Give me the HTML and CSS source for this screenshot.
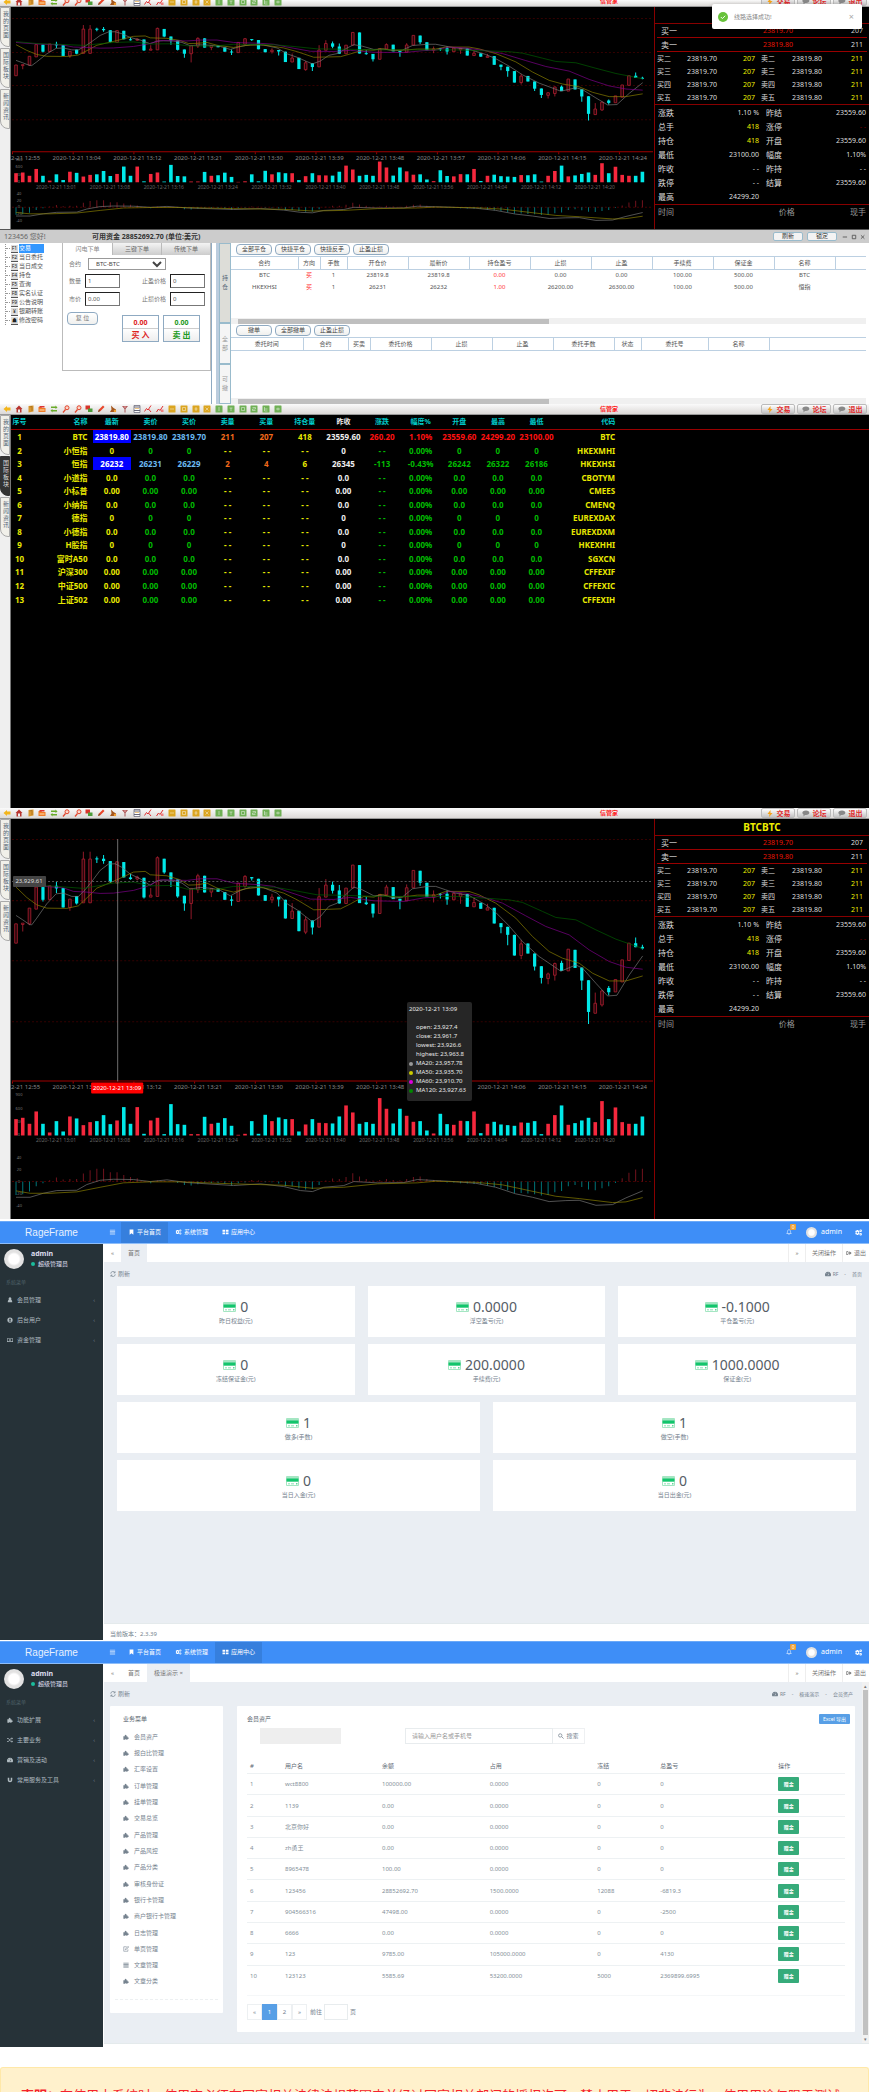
FILE: index.html
```html
<!DOCTYPE html>
<html lang="zh-CN">
<head>
<meta charset="utf-8">
<title>信管家</title>
<link rel="stylesheet" href="styles.css">
</head>
<body>
<svg class="sprite" aria-hidden="true">
  <symbol id="i-bars" viewBox="0 0 16 16"><path d="M1 2h14v2H1zM1 5.500h14v2H1zM1 9h14v2H1zM1 12.500h14v2H1z"/></symbol>
  <symbol id="i-bookmark" viewBox="0 0 16 16"><path d="M3 1h10v14l-5-4-5 4z"/></symbol>
  <symbol id="i-gears" viewBox="0 0 16 16"><path fill-rule="evenodd" d="M4 2.500h3l.5 1.500 1.500-.5 1.500 2-1 1.500v2l1 1.500-1.500 2-1.500-.5-.5 1.500H4l-.5-1.500-1.500.5L.5 10.500l1-1.500V7l-1-1.500L2 3.500l1.500.5zM5.500 6a2 2 0 100 4 2 2 0 000-4z"/><path fill-rule="evenodd" d="M13 1a2.800 2.800 0 110 5.600A2.800 2.800 0 0113 1zm0 1.800a1 1 0 100 2 1 1 0 000-2zM13 9a2.800 2.800 0 110 5.600A2.800 2.800 0 0113 9zm0 1.800a1 1 0 100 2 1 1 0 000-2z"/></symbol>
  <symbol id="i-grid" viewBox="0 0 16 16"><path d="M0 2h7v5H0zM9 2h7v5H9zM0 9h7v5H0zM9 9h7v5H9z"/></symbol>
  <symbol id="i-bell" viewBox="0 0 16 16"><path fill="none" stroke="currentColor" stroke-width="1.500" d="M2 12c2-2 2-4 2-6 0-2 1.500-4 4-4s4 2 4 4c0 2 0 4 2 6zM6.500 13.500c.5 1.500 2.500 1.500 3 0"/></symbol>
  <symbol id="i-user" viewBox="0 0 16 16"><path d="M8 1a3.500 3.500 0 013 5.500C13 8 14 11 14 14H2c0-3 1-6 3-7.500A3.500 3.500 0 018 1z"/></symbol>
  <symbol id="i-globe" viewBox="0 0 16 16"><path fill-rule="evenodd" d="M8 1a7 7 0 110 14A7 7 0 018 1zm0 3a2 2 0 100 4.500A2 2 0 008 4zM4.500 12h7c0-2-1.500-3-3.500-3s-3.500 1-3.500 3z"/></symbol>
  <symbol id="i-money" viewBox="0 0 16 16"><path fill-rule="evenodd" d="M0 3h16v10H0zm1.500 1.500v7h13v-7zM8 5.500c1.500 0 2 1 2 2.500s-.5 2.500-2 2.500S6 9.500 6 8s.5-2.500 2-2.500z"/></symbol>
  <symbol id="i-puzzle" viewBox="0 0 16 16"><path d="M1 6h4c-1-2 0-4 2-4s3 2 2 4h3v3c2-1 3 0 3 2s-1 3-3 2v2H9c0-2-3-2-3 0H1z"/></symbol>
  <symbol id="i-random" viewBox="0 0 16 16"><path fill="none" stroke="currentColor" stroke-width="2" d="M0 4h4l6 8h5M0 12h4l6-8h5M13 1.500L15.500 4 13 6.500M13 9.500l2.500 2.500-2.500 2.500"/></symbol>
  <symbol id="i-dash" viewBox="0 0 16 16"><path fill-rule="evenodd" d="M1 14a8 8 0 1114 0zM8 4v2h1V4zm-4 3l1 1 1-1-1-1zm6 0L7 11l1 1 3-4z"/></symbol>
  <symbol id="i-magnet" viewBox="0 0 16 16"><path d="M2 2h4v6c0 3 4 3 4 0V2h4v6c0 8-12 8-12 0z"/></symbol>
  <symbol id="i-refresh" viewBox="0 0 16 16"><path fill="none" stroke="currentColor" stroke-width="2" d="M2 7a6 6 0 0111-3M14 9a6 6 0 01-11 3M13.500 1v4h-4M2.500 15v-4h4"/></symbol>
  <symbol id="i-exit" viewBox="0 0 16 16"><path d="M1 3h5v2H3v6h3v2H1zM5 6.500h4V3l6 5-6 5V9.500H5z"/></symbol>
  <symbol id="i-edit" viewBox="0 0 16 16"><path fill="none" stroke="currentColor" stroke-width="1.500" d="M10 2H2v12h11V9M6 10l1-3 7-6 1.500 2-7 6z"/></symbol>
  <symbol id="i-search" viewBox="0 0 16 16"><path fill="none" stroke="currentColor" stroke-width="2" d="M10.500 6.500a4.500 4.500 0 11-9 0 4.500 4.500 0 019 0zM10 10l5 5"/></symbol>
  <symbol id="i-card" viewBox="0 0 26 20"><rect width="26" height="20" rx="2" fill="#a5e6c3"/><path fill="#12c56c" d="M1 5h24v6H1z"/><path fill="#fff" d="M2 12h22v6H2z"/><path fill="#5fd699" d="M4 15h4v1.500H4zM10 15h6v1.500h-6zM20 14h3v3h-3z"/></symbol>
</svg>

<section class="terminal terminal-short">
  <header class="toolbar"></header>
  <div class="terminal-body">
    <nav class="side-tabs"></nav>
    <div class="chart" data-size="short"></div>
    <aside class="quote"></aside>
  </div>
  <div class="toast" role="status">
    <svg class="toast-icon" viewBox="0 0 16 16"><circle cx="8" cy="8" r="8" fill="#67c23a"/><path d="M4.500 8l2.500 2.500 4.500-4.500" fill="none" stroke="#fff" stroke-width="1.500"/></svg>
    <span>线路选择成功!</span>
    <button type="button" class="toast-close" aria-label="关闭">×</button>
  </div>
</section>

<section class="trade">
  <header class="trade-head">
    <span class="greet">123456 您好!</span>
    <strong>可用资金 28852692.70 (单位:美元)</strong>
    <div class="window-tools">
      <button type="button">刷新</button><button type="button">锁定</button>
      <svg viewBox="0 0 30 8"><path d="M2 4h5M13 2h4v4h-4zM23 2l4 4M27 2l-4 4" fill="none" stroke="#555" stroke-width="1"/></svg>
    </div>
  </header>
  <div class="trade-body">
    <ul class="tree">
      <li class="on"><i>F1</i><a href="#">交易</a></li>
      <li><i>F2</i><a href="#">当日委托</a></li>
      <li><i>F3</i><a href="#">当日成交</a></li>
      <li><i>F4</i><a href="#">持仓</a></li>
      <li><i>F5</i><a href="#">查询</a></li>
      <li><i>F8</i><a href="#">实名认证</a></li>
      <li><i>F9</i><a href="#">公告说明</a></li>
      <li><i>¥</i><a href="#">银期转账</a></li>
      <li><i>☗</i><a href="#">修改密码</a></li>
    </ul>
    <div class="order">
      <div class="order-tabs"><button type="button" class="on">闪电下单</button><button type="button">三键下单</button><button type="button">传统下单</button></div>
      <form class="order-form">
        <label for="sym">合约</label><select id="sym"><option>BTC-BTC</option></select>
        <label for="qty">数量</label><input id="qty" value="1"><label for="tp">止盈价格</label><input id="tp" value="0">
        <label for="px">市价</label><input id="px" value="0.00"><label for="sl">止损价格</label><input id="sl" value="0">
        <div class="order-actions">
          <button type="reset" class="pill">复 位</button>
          <button type="button" class="deal buy"><b>0.00</b><span>买 入</span></button>
          <button type="button" class="deal sell"><b>0.00</b><span>卖 出</span></button>
        </div>
      </form>
    </div>
    <div class="splitter"></div>
    <nav class="pos-tabs"><button type="button" class="on">持仓</button><button type="button">全部</button><button type="button">可撤</button></nav>
    <div class="pos">
      <div class="pills"><button type="button" class="pill">全部平仓</button><button type="button" class="pill">快捷平仓</button><button type="button" class="pill">快捷反手</button><button type="button" class="pill">止盈止损</button></div>
      <div class="pos-box pos-box-a">
        <table class="pos-table">
          <colgroup><col class="w67"><col class="w21"><col class="w28"><col class="w61"><col class="w61"><col class="w61"><col class="w61"><col class="w61"><col class="w61"><col class="w61"><col class="w61"><col></colgroup>
          <thead><tr><th>合约</th><th>方向</th><th>手数</th><th>开仓价</th><th>最新价</th><th>持仓盈亏</th><th>止损</th><th>止盈</th><th>手续费</th><th>保证金</th><th>名称</th><th></th></tr></thead>
          <tbody>
            <tr><td>BTC</td><td class="up">买</td><td>1</td><td>23819.8</td><td>23819.8</td><td class="up">0.00</td><td>0.00</td><td>0.00</td><td>100.00</td><td>500.00</td><td>BTC</td><td></td></tr>
            <tr><td>HKEXHSI</td><td class="up">买</td><td>1</td><td>26231</td><td>26232</td><td class="up">1.00</td><td>26200.00</td><td>26300.00</td><td>100.00</td><td>500.00</td><td>恒指</td><td></td></tr>
          </tbody>
        </table>
        <div class="hscroll"><span></span></div>
      </div>
      <div class="pills"><button type="button" class="pill">撤单</button><button type="button" class="pill">全部撤单</button><button type="button" class="pill">止盈止损</button></div>
      <div class="pos-box pos-box-b">
        <table class="pos-table">
          <colgroup><col class="w72"><col class="w45"><col class="w21"><col class="w61"><col class="w61"><col class="w61"><col class="w61"><col class="w28"><col class="w67"><col class="w61"><col></colgroup>
          <thead><tr><th>委托时间</th><th>合约</th><th>买卖</th><th>委托价格</th><th>止损</th><th>止盈</th><th>委托手数</th><th>状态</th><th>委托号</th><th>名称</th><th></th></tr></thead>
        </table>
        <div class="hscroll"><span></span></div>
      </div>
    </div>
  </div>
</section>

<section class="terminal terminal-market">
  <header class="toolbar"></header>
  <div class="terminal-body">
    <nav class="side-tabs" data-on="1"></nav>
    <div class="market">
      <table class="market-table">
        <colgroup><col class="c-no"><col class="c-name"><col class="c-num" span="12"><col class="c-code"><col></colgroup>
        <thead><tr><th>序号</th><th class="r">名称</th><th>最新</th><th>卖价</th><th>买价</th><th>卖量</th><th>买量</th><th>持仓量</th><th class="white">昨收</th><th>涨跌</th><th>幅度%</th><th>开盘</th><th>最高</th><th>最低</th><th class="r">代码</th><th></th></tr></thead>
        <tbody id="market-rows"></tbody>
      </table>
    </div>
  </div>
</section>

<section class="terminal terminal-tall">
  <header class="toolbar"></header>
  <div class="terminal-body">
    <nav class="side-tabs"></nav>
    <div class="chart" data-size="tall">
      <div class="tip">
        <p>2020-12-21 13:09</p>
        <ul>
          <li>open: 23,927.4</li><li>close: 23,961.7</li><li>lowest: 23,926.6</li><li>highest: 23,963.8</li>
          <li class="dot d20">MA20: 23,957.78</li><li class="dot d50">MA50: 23,935.70</li><li class="dot d60">MA60: 23,910.70</li><li class="dot d120">MA120: 23,927.63</li>
        </ul>
      </div>
    </div>
    <aside class="quote"></aside>
  </div>
</section>

<section class="admin admin-home">
  <header class="admin-head">
    <a class="brand" href="#">RageFrame</a>
    <nav>
      <a href="#" class="burger" aria-label="菜单"><svg class="icon"><use href="#i-bars"/></svg></a>
      <a href="#" class="on"><svg class="icon"><use href="#i-bookmark"/></svg>平台首页</a>
      <a href="#"><svg class="icon"><use href="#i-gears"/></svg>系统管理</a>
      <a href="#"><svg class="icon"><use href="#i-grid"/></svg>应用中心</a>
    </nav>
    <div class="me"><span class="bell"><svg class="icon"><use href="#i-bell"/></svg><em>0</em></span><span class="avatar avatar-s"></span><span>admin</span><svg class="icon"><use href="#i-gears"/></svg></div>
  </header>
  <div class="admin-main">
    <aside class="admin-side">
      <div class="profile"><span class="avatar"></span><p><b>admin</b><span class="role">超级管理员</span></p></div>
      <h3>系统菜单</h3>
      <ul>
        <li><a href="#"><svg class="icon"><use href="#i-user"/></svg>会员管理<i>‹</i></a></li>
        <li><a href="#"><svg class="icon"><use href="#i-globe"/></svg>后台用户<i>‹</i></a></li>
        <li><a href="#"><svg class="icon"><use href="#i-money"/></svg>资金管理<i>‹</i></a></li>
      </ul>
    </aside>
    <div class="admin-page">
      <div class="page-tabs"><a href="#" class="arrow">«</a><a href="#" class="on">首页</a><span class="grow"></span><a href="#" class="arrow line">»</a><a href="#" class="line">关闭操作</a><a href="#" class="line out"><svg class="icon"><use href="#i-exit"/></svg>退出</a></div>
      <div class="page-body">
        <div class="crumbs"><a href="#"><svg class="icon"><use href="#i-refresh"/></svg>刷新</a><span class="path"><svg class="icon"><use href="#i-dash"/></svg>RF<i>-</i>首页</span></div>
        <div class="cards">
          <div class="card"><p><svg class="card-icon"><use href="#i-card"/></svg>0</p><small>昨日权益(元)</small></div>
          <div class="card"><p><svg class="card-icon"><use href="#i-card"/></svg>0.0000</p><small>浮空盈亏(元)</small></div>
          <div class="card"><p><svg class="card-icon"><use href="#i-card"/></svg>-0.1000</p><small>平仓盈亏(元)</small></div>
          <div class="card"><p><svg class="card-icon"><use href="#i-card"/></svg>0</p><small>冻结保证金(元)</small></div>
          <div class="card"><p><svg class="card-icon"><use href="#i-card"/></svg>200.0000</p><small>手续费(元)</small></div>
          <div class="card"><p><svg class="card-icon"><use href="#i-card"/></svg>1000.0000</p><small>保证金(元)</small></div>
          <div class="card wide"><p><svg class="card-icon"><use href="#i-card"/></svg>1</p><small>做多(手数)</small></div>
          <div class="card wide"><p><svg class="card-icon"><use href="#i-card"/></svg>1</p><small>做空(手数)</small></div>
          <div class="card wide"><p><svg class="card-icon"><use href="#i-card"/></svg>0</p><small>当日入金(元)</small></div>
          <div class="card wide"><p><svg class="card-icon"><use href="#i-card"/></svg>0</p><small>当日出金(元)</small></div>
        </div>
      </div>
      <footer class="version">当前版本：2.3.39</footer>
    </div>
  </div>
</section>

<section class="admin admin-users">
  <header class="admin-head">
    <a class="brand" href="#">RageFrame</a>
    <nav>
      <a href="#" class="burger" aria-label="菜单"><svg class="icon"><use href="#i-bars"/></svg></a>
      <a href="#"><svg class="icon"><use href="#i-bookmark"/></svg>平台首页</a>
      <a href="#"><svg class="icon"><use href="#i-gears"/></svg>系统管理</a>
      <a href="#" class="on"><svg class="icon"><use href="#i-grid"/></svg>应用中心</a>
    </nav>
    <div class="me"><span class="bell"><svg class="icon"><use href="#i-bell"/></svg><em>0</em></span><span class="avatar avatar-s"></span><span>admin</span><svg class="icon"><use href="#i-gears"/></svg></div>
  </header>
  <div class="admin-main">
    <aside class="admin-side">
      <div class="profile"><span class="avatar"></span><p><b>admin</b><span class="role">超级管理员</span></p></div>
      <h3>系统菜单</h3>
      <ul>
        <li><a href="#"><svg class="icon"><use href="#i-puzzle"/></svg>功能扩展<i>‹</i></a></li>
        <li><a href="#"><svg class="icon"><use href="#i-random"/></svg>主要业务<i>‹</i></a></li>
        <li><a href="#"><svg class="icon"><use href="#i-dash"/></svg>营销及活动<i>‹</i></a></li>
        <li><a href="#"><svg class="icon"><use href="#i-magnet"/></svg>常用服务及工具<i>‹</i></a></li>
      </ul>
    </aside>
    <div class="admin-page">
      <div class="page-tabs"><a href="#" class="arrow">«</a><a href="#">首页</a><a href="#" class="on">极速演示 ×</a><span class="grow"></span><a href="#" class="arrow line">»</a><a href="#" class="line">关闭操作</a><a href="#" class="line out"><svg class="icon"><use href="#i-exit"/></svg>退出</a></div>
      <div class="page-body with-scroll">
        <div class="page-inner">
          <div class="crumbs"><a href="#"><svg class="icon"><use href="#i-refresh"/></svg>刷新</a><span class="path"><svg class="icon"><use href="#i-dash"/></svg>RF<i>-</i>极速演示<i>-</i>会员资产</span></div>
          <div class="columns">
            <div class="panel biz">
              <h4>业务菜单</h4>
              <ul id="biz-menu"></ul>
              <hr>
            </div>
            <div class="panel users">
              <div class="panel-head"><h4>会员资产</h4><button type="button" class="excel">Excel 导出</button></div>
              <form class="search"><span class="mask"></span><input aria-label="搜索" placeholder="请输入用户名或手机号"><button type="button"><svg class="icon"><use href="#i-search"/></svg>搜索</button></form>
              <table class="user-table">
                <colgroup><col class="u-no"><col class="u-name"><col class="u-money"><col class="u-money"><col class="u-frozen"><col class="u-profit"><col></colgroup>
                <thead><tr><th>#</th><th>用户名</th><th>余额</th><th>占用</th><th>冻结</th><th>总盈亏</th><th>操作</th></tr></thead>
                <tbody id="user-rows"></tbody>
              </table>
              <div class="pager"><button type="button">«</button><button type="button" class="on">1</button><button type="button">2</button><button type="button">»</button><label for="page">前往</label><input id="page"><span>页</span></div>
            </div>
          </div>
        </div>
        <div class="vscroll"><i>▴</i><span></span><i>▾</i></div>
      </div>
    </div>
  </div>
</section>

<p class="notice"><b>声明：</b>在使用本系统时，使用方必须在国家相关法律法规范围内并经过国家相关部门的授权许可，禁止用于一切非法行为。使用用途仅限于测试</p>
<script src="app.js"></script>
</body>
</html>
```

FILE: styles.css
```css
* { box-sizing: border-box; }
body, p, ul, h3, h4, form { margin: 0; padding: 0; }
body { font: 7px/10px "Noto Sans", "Noto Sans CJK SC", sans-serif; background: #fff; color: #333; }
ul { list-style: none; }
a { color: inherit; text-decoration: none; }
i, em { font-style: normal; }
button, input, select { font: inherit; color: inherit; margin: 0; padding: 0; border: 0; background: none; min-width: 0; }
button { white-space: nowrap; }
.sprite { position: absolute; width: 0; height: 0; }
.icon { width: 6px; height: 6px; fill: currentColor; flex: none; }

/* terminal */
.terminal { position: relative; display: flex; flex-direction: column; background: #000; }
.terminal-short { height: 230px; border-bottom: 1px solid #555; }
.terminal-market { min-height: 404px; }
.terminal-tall { min-height: 410px; margin-bottom: 2px; }
.toolbar { height: 11px; display: flex; align-items: center; padding: 0 2px 0 3px; background: linear-gradient(#fafafa, #dcd9d7); border-bottom: 1px solid #999; overflow: hidden; flex: none; }
.terminal-short .toolbar { height: 7px; align-items: flex-end; }
.tools { width: 279px; display: flex; justify-content: space-between; }
.tools svg { width: 8px; height: 8px; display: block; }
.app-name { margin-left: auto; color: #f22; font-weight: bold; font-size: 6px; }
.tool-btns { display: flex; gap: 2px; margin-left: 143px; }
.tool-btns button { width: 34px; height: 10px; display: flex; align-items: center; justify-content: center; gap: 3px; font-size: 7px; line-height: 9px; font-weight: bold; color: #e02b2b; background: linear-gradient(#fff, #c4c4c4); border: 1px solid #bbb; border-radius: 2px; }
.tool-btns svg { width: 8px; height: 7px; }
.terminal-body { flex: 1; display: flex; min-height: 0; }
.side-tabs { width: 11px; flex: none; background: #efefef; border-right: 1px solid #777; display: flex; flex-direction: column; gap: 1px; }
.side-tabs button { width: 10px; height: 40px; padding: 3px 2px 7px; font-size: 6px; line-height: 7px; color: #567; white-space: normal; word-break: break-all; background: #f1f0ea; border: 1px solid #aaa; border-radius: 0 0 0 8px; }
.side-tabs .on { background: #333; color: #ddd; border-color: #333; }
.chart { flex: 1; min-width: 0; position: relative; }
.chart svg { display: block; width: 100%; height: auto; }
.tip { position: absolute; left: 396px; top: 183px; width: 65px; padding: 2px; background: #262626; color: #e8e8e8; border-radius: 2px; font-size: 6px; white-space: nowrap; }
.tip p { line-height: 10px; margin-bottom: 9px; }
.tip li { padding-left: 7px; line-height: 9px; height: 9px; position: relative; }
.tip ul { padding-bottom: 4px; }
.dot::before { content: ""; position: absolute; left: 0; top: 3px; width: 4px; height: 4px; border-radius: 50%; background: #999; }
.d50::before { background: #cc0; }
.d60::before { background: #d0d; }
.d120::before { background: #080; }

.quote { width: 215px; flex: none; border-left: 1px solid #800; color: #ddd; font-size: 7px; }
.quote h2 { margin: 0; height: 17px; font-size: 10px; line-height: 16px; text-align: center; color: #ee0; border-bottom: 1px solid #800; }
.best { display: grid; grid-template-columns: 84px 66px 1fr; align-items: center; margin: 0 2px; padding: 0 4px; height: 14px; border-bottom: 1px solid #900; font-size: 8px; }
.best b { font-weight: normal; color: #e81505; text-align: center; font-size: 7px; }
.best span:last-child { text-align: right; font-size: 7px; }
.levels { padding: 0 6px 0 2px; border-bottom: 1px solid #800; }
.level { display: grid; grid-template-columns: 20px 50px 28px 31px 42px 1fr; height: 13px; line-height: 13px; }
.level span:nth-child(3n+2) { text-align: center; }
.level span:nth-child(3n) { text-align: right; color: #ee0; }
.level span:nth-child(4) { padding-left: 6px; }
.stats { padding: 1px 3px 0; border-bottom: 1px solid #800; }
.stat { display: grid; grid-template-columns: 50px 51px 50px 1fr; height: 14px; line-height: 13px; }
.stat span:nth-child(odd), .deals { font-size: 8px; }
.stat span:nth-child(3) { padding-left: 7px; }
.stat span:nth-child(even) { text-align: right; }
.stat .hot { color: #ee0; }
.stat .dim { color: #700; }
.deals { display: grid; grid-template-columns: 1fr 1fr 1fr; padding: 0 3px; line-height: 14px; color: #999; }
.deals span:nth-child(2) { text-align: right; padding-right: 2px; }
.deals span:last-child { text-align: right; }

.toast { position: absolute; top: 4px; right: 7px; width: 150px; height: 25px; padding: 0 8px 0 6px; display: flex; align-items: center; gap: 6px; background: #fff; border-radius: 2px; color: #888; box-shadow: 0 1px 4px #0004; font-size: 6px; }
.toast-icon { width: 10px; height: 10px; }
.toast-close { margin-left: auto; font-size: 9px; color: #aaa; }

/* trade */
.trade { height: 174px; display: flex; flex-direction: column; overflow: hidden; }
.trade-head { height: 13px; display: flex; align-items: center; padding: 0 2px 0 4px; background: #ccc; color: #333; flex: none; }
.greet { width: 88px; color: #666; }
.window-tools { margin-left: auto; display: flex; align-items: center; gap: 4px; }
.window-tools button { width: 30px; height: 9px; font-size: 6px; line-height: 7px; background: #f3f3f3; border: 1px solid #9bc; border-radius: 2px; }
.window-tools svg { width: 26px; height: 8px; }
.trade-body { flex: 1; display: flex; min-height: 0; }
.tree { width: 62px; flex: none; padding: 1px 0 0 5px; font-size: 6px; }
.tree li { display: flex; align-items: center; gap: 1px; height: 9px; line-height: 9px; border-left: 1px dotted #999; color: #555; }
.tree li::before { content: ""; width: 4px; border-top: 1px dotted #999; }
.tree i { width: 7px; font-size: 5px; line-height: 7px; border-bottom: 1px solid #555; color: #222; background: #ddd; text-align: center; }
.tree a { white-space: nowrap; }
.tree .on a { width: 25px; background: #3397ff; color: #fff; }
.order { width: 149px; flex: none; border: 1px solid #bbb; border-top: 0; align-self: flex-start; height: 128px; }
.order-tabs { display: grid; grid-template-columns: repeat(3, 1fr); }
.order-tabs button { height: 12px; font-size: 6px; color: #666; background: linear-gradient(#f4f4f4, #ccc); border-left: 1px solid #bbb; }
.order-tabs .on { background: #fff; border-left: 0; color: #888; }
.order-form { display: grid; grid-template-columns: 14px 35px 42px 35px; column-gap: 4px; row-gap: 4px; padding: 3px 3px 0 4px; align-items: center; font-size: 6px; color: #777; }
.order-form label { text-align: right; white-space: nowrap; }
.order-form select { grid-column: 2 / 4; height: 12px; margin-left: 3px; padding-left: 3px; border: 1px solid #999; background: #fff; color: #444; font-size: 6px; }
.order-form select + label { grid-column: 1; }
.order-form input { height: 14px; padding-left: 2px; border: 1px solid #777; border-left-color: #222; border-top-color: #222; color: #555; }
.order-actions { grid-column: 1 / -1; display: flex; align-items: flex-start; gap: 4px; padding-top: 2px; }
.pill { height: 11px; padding: 0 5px; font-size: 6px; line-height: 9px; color: #444; border: 1px solid #8faac2; border-radius: 4px; background: linear-gradient(#fff, #f0f0ee); }
.order-actions .pill { width: 31px; height: 13px; margin-right: 20px; color: #777; }
.deal { width: 37px; height: 27px; margin-top: 3px; display: flex; flex-direction: column; border: 1px solid #8faac2; background: linear-gradient(#fff 50%, #eee); }
.deal b { width: 100%; height: 13px; font-size: 7px; line-height: 13px; border-bottom: 1px solid #ccc; }
.deal span { width: 100%; font-size: 8px; line-height: 11px; font-weight: bold; }
.buy { color: #d22; }
.sell { color: #292; }
.splitter { width: 8px; flex: none; border: 1px solid #8faac2; border-width: 0 3px 0 1px; border-right-color: #bcd; background: #fff; }
.pos-tabs { width: 12px; flex: none; display: flex; flex-direction: column; }
.pos-tabs button { height: 41px; padding: 0 2px; font-size: 6px; line-height: 9px; white-space: normal; word-break: break-all; color: #999; border: 1px solid #9bc; background: #f5f5f5; }
.pos-tabs .on { height: 82px; background: #ddddd8; color: #567; }
.pos { flex: 1; min-width: 0; padding-right: 3px; display: flex; flex-direction: column; }
.pills { display: flex; gap: 3px; padding: 1px 0 1px 5px; height: 13px; flex: none; }
.pills .pill { width: 36px; padding: 0; }
.pos-box { display: flex; flex-direction: column; justify-content: space-between; flex: none; }
.pos-box-a { height: 68px; }
.pos-box-b { height: 67px; }
.pos-table { width: 100%; border-collapse: collapse; table-layout: fixed; text-align: center; color: #555; white-space: nowrap; }
.pos-table th { height: 13px; padding: 0; font-size: 6px; line-height: 9px; font-weight: normal; border: 1px solid #bcd0e2; border-left-width: 0; }
.pos-table th:last-child { border-right: 0; }
.pos-table td { height: 12px; padding: 0; overflow: hidden; font-size: 6px; line-height: 9px; }
.pos-table .up { color: #f33; }
.w21 { width: 22px; } .w28 { width: 27px; } .w45 { width: 45px; } .w61 { width: 61px; } .w67 { width: 67px; } .w72 { width: 72px; }
.hscroll { height: 6px; padding: 1px 7px; background: #f0f0f0; }
.hscroll span { display: block; width: 50%; height: 5px; background: #bfbfbf; }

/* market */
.market { flex: 1; min-width: 0; }
.market-table { width: 100%; height: 191px; border-collapse: collapse; table-layout: fixed; font-size: 8px; line-height: 9px; font-weight: bold; text-align: center; white-space: nowrap; color: #0b0; }
.market-table th { height: 14px; padding: 0; font-size: 7px; color: #0cc; border-bottom: 1px solid #900; }
.market-table td { padding: 0; }
.market-table .r { text-align: right; padding-right: 5px; }
.c-no { width: 2%; } .c-name { width: 7.500%; } .c-num { width: 4.500%; } .c-code { width: 7.500%; }
.market-table .yl { color: #e8e800; }
.market-table .white { color: #eee; }
.market-table .sky { color: #6bb8f0; }
.market-table .or { color: #f26a1b; }
.market-table .red { color: #f11; }
.market-table .hl { background: #00f; color: #fff; }

/* admin */
.admin { display: flex; flex-direction: column; font-size: 6px; }
.admin-home { min-height: 419px; margin-bottom: 1px; }
.admin-users { min-height: 405px; }
.admin-head { height: 23px; display: flex; align-items: stretch; background: #3e8ef7; color: #fff; flex: none; border-top: 1px solid #6ba9f8; border-bottom: 1px solid #8dbdf9; }
.brand { width: 103px; text-align: center; font: 10px/22px "Liberation Sans", sans-serif; color: #e8f1fe; }
.admin-head nav { display: flex; }
.admin-head nav a { display: flex; align-items: center; gap: 2px; padding: 0 7px; }
.admin-head nav .icon { width: 7px; }
.admin-head nav .burger { width: 18px; padding: 0 6px; opacity: .7; }
.admin-head nav .on { background: #367fdd; }
.me { margin-left: auto; display: flex; align-items: center; padding-right: 7px; font-size: 7px; gap: 4px; }
.me > .icon { width: 7px; height: 7px; margin-left: 9px; }
.bell { position: relative; margin-right: 10px; display: flex; }
.bell em { position: absolute; left: 4px; top: -5px; width: 6px; height: 6px; font-size: 5px; line-height: 6px; text-align: center; background: #f0a030; border-radius: 1px; }
.avatar { width: 20px; height: 20px; flex: none; border-radius: 50%; background: radial-gradient(ellipse at 50% 50%, #fff 35%, #e2e2e2 50%); }
.avatar-s { width: 11px; height: 11px; }
.admin-main { flex: 1; display: flex; }
.admin-side { width: 103px; flex: none; background: #263238; color: #b0bbc0; }
.profile { display: flex; gap: 7px; padding: 5px 4px 0; height: 30px; }
.profile p { display: flex; flex-direction: column; color: #dde; line-height: 10px; }
.profile b { font-size: 7px; }
.role::before { content: ""; display: inline-block; width: 4px; height: 4px; margin-right: 3px; border-radius: 50%; background: #1abc9c; }
.admin-side h3 { padding-left: 6px; font-size: 5px; font-weight: normal; line-height: 16px; color: #4f6169; }
.admin-side li a { height: 20px; display: flex; align-items: center; gap: 4px; padding: 0 8px 0 7px; }
.admin-side li i { margin-left: auto; color: #71818a; }
.admin-page { flex: 1; min-width: 0; display: flex; flex-direction: column; margin-left: 1px; }
.page-tabs { height: 18px; display: flex; flex: none; color: #777; line-height: 18px; }
.page-tabs a { padding: 0 7px; }
.page-tabs .arrow { width: 17px; text-align: center; }
.page-tabs .on { background: #eaeef3; }
.page-tabs .line { border-left: 1px solid #eee; padding: 0 6px; }
.page-tabs .out { display: flex; align-items: center; gap: 2px; padding: 0 3px; }
.grow { flex: 1; }
.page-body { flex: 1; background: #eaeef3; color: #76838f; }
.crumbs { height: 24px; padding: 0 7px 0 6px; display: flex; align-items: center; justify-content: space-between; }
.crumbs a, .path { display: flex; align-items: center; gap: 2px; }
.path { font-size: 5px; }
.path i { margin: 0 4px; }
.cards { display: grid; grid-template-columns: repeat(6, 1fr); gap: 7px 13px; padding: 0 13px; }
.card { grid-column: span 2; height: 51px; background: #fff; padding-top: 12px; text-align: center; }
.card.wide { grid-column: span 3; }
.card p { display: flex; align-items: center; justify-content: center; gap: 4px; font-size: 14px; line-height: 18px; color: #555d66; }
.card-icon { width: 13px; height: 10px; }
.card small { display: block; font-size: 6px; line-height: 10px; }
.version { height: 17px; padding-left: 6px; border-top: 1px solid #e4eaec; line-height: 21px; color: #76838f; overflow: hidden; }
.with-scroll { display: flex; margin-bottom: 3px; border-bottom: 1px solid #e4eaec; }
.page-inner { flex: 1; min-width: 0; }
.with-scroll .crumbs { padding-right: 9px; }
.columns { display: grid; grid-template-columns: 113px 1fr; gap: 14px; align-items: start; padding: 0 7px 11px 6px; }
.panel { background: #fff; border-radius: 1px; }
.panel h4 { font-size: 6px; font-weight: normal; line-height: 10px; color: #5a6670; }
.biz { padding: 8px 5px 13px; }
.biz h4 { padding-left: 8px; margin-bottom: 5px; }
.biz ul { display: grid; grid-template-rows: repeat(16, 1fr); height: 261px; }
.biz li a { display: flex; align-items: center; gap: 5px; padding-left: 8px; }
.biz li { display: flex; align-items: center; }
.biz hr { margin: 9px 0 0; border: 0; border-top: 1px dashed #edf0f2; }
.users { padding: 8px 10px 10px; height: 326px; }
.panel-head { display: flex; justify-content: space-between; align-items: flex-start; margin-right: -5px; height: 14px; }
.excel { width: 31px; height: 10px; font-size: 5px; line-height: 10px; background: #589fe6; color: #fff; border-radius: 1px; }
.search { display: flex; height: 16px; padding-left: 13px; margin-bottom: 15px; }
.mask { width: 81px; background: #eee; margin-right: 64px; }
.search input { width: 148px; padding-left: 6px; border: 1px solid #e8ecee; }
.search input::placeholder { color: #999; }
.search button { width: 32px; display: flex; align-items: center; justify-content: center; gap: 2px; border: 1px solid #eef0f2; border-left: 0; }
.user-table { width: 100%; height: 227px; border-collapse: collapse; table-layout: fixed; text-align: left; color: #848f99; }
.user-table th { height: 15px; padding: 0 3px; font-weight: normal; color: #5f6b76; }
.user-table td { padding: 0 3px; border-top: 1px solid #edf1f3; line-height: 8px; }
.u-no { width: 35px; } .u-name { width: 97px; } .u-money { width: 18%; } .u-frozen { width: 63px; } .u-profit { width: 118px; }
.user-table button { width: 21px; height: 14px; font-size: 5px; line-height: 14px; font-weight: bold; color: #fff; background: #36ab7a; border-radius: 1px; display: block; }
.pager { display: flex; align-items: center; margin-top: 9px; padding-top: 8px; border-top: 1px solid #f5f7f8; }
.pager button { width: 15px; height: 16px; border: 1px solid #edf0f2; }
.pager .on { background: #589fe6; color: #fff; border-color: #589fe6; }
.pager label { margin: 0 2px 0 3px; }
.pager input { width: 24px; height: 16px; border: 1px solid #e8ecee; margin-right: 2px; }
.vscroll { width: 7px; background: #f1f1f1; display: flex; flex-direction: column; text-align: center; font-size: 5px; line-height: 8px; color: #777; }
.vscroll span { flex: 1; margin: 0 1px; background: #c1c1c1; }

.notice { margin-top: 20px; height: 27px; overflow: hidden; padding: 17px 20px 0; font-size: 13px; line-height: 20px; color: #f5222d; background: #fff1cc; border: 1px solid #ffe8a8; border-bottom: 0; border-radius: 3px 3px 0 0; white-space: nowrap; }
```

FILE: app.js
```js
const all = (s) => document.querySelectorAll(s);

/* toolbar */
const square = (bg, mark) => `<rect x="1" y="1" width="14" height="14" rx="1" fill="${bg}"/><path d="${mark}" fill="none" stroke="#fff" stroke-width="1.500" opacity=".6"/>`;
const zoomIcon = '<circle cx="10" cy="5.500" r="4" fill="#fbd5c8" stroke="#e2452c" stroke-width="2"/><path d="M7 9l-5 6" stroke="#e2452c" stroke-width="2.500"/>';
const glyphs = [
  '<path d="M1 8l7-6v3h7v6H8v3z" fill="#f3b51b"/>',
  '<path d="M1 8l7-7 7 7-2 0v7H3V8z" fill="#b8342e"/><path d="M6 9h4v6H6z" fill="#eee"/>',
  '<path d="M3 2l10-1v12l-10 2z" fill="#d9972f"/><path d="M5 4l5-1v9" fill="none" stroke="#8a5a16"/>',
  '<path d="M1 4h6l1 2h7v8H1z" fill="#f07b26"/><path d="M3 2h10v3H3z" fill="#d33"/><path d="M3 9h10v2H3z" fill="#ffe1b0"/>',
  '<path d="M2 6V3h9V1l4 4-4 3V6zM14 10v3H5v2l-4-4 4-3v2z" fill="#6aac2b"/>',
  zoomIcon, zoomIcon,
  '<path d="M1 1h9v8H1z" fill="#d8342b"/><path d="M6 7h9v7H6z" fill="#4c9c3a"/>',
  '<path d="M2 14l2-5 8-8 3 3-8 8z" fill="#e8452a"/><path d="M2 14l2-5 3 3z" fill="#7a4a20"/>',
  '<path d="M4 1l5 5 5 3-1 5H2l3-5z" fill="#a5561c"/><circle cx="12" cy="12" r="2.500" fill="#f0a030"/>',
  '<path d="M2 2h12l-5 6v7H7V8z" fill="#a55"/><path d="M5 3h6l-3 3z" fill="#eaa"/>',
  '<path d="M2 1h12v14H2z" fill="#fff" stroke="#667" stroke-width="1.500"/><path d="M2 4h12M2 11h12" stroke="#667" stroke-width="2"/><path d="M4 7h8" stroke="#d80"/>',
  '<path d="M1 13l4-6 3 3 6-9M9 8l5 6" fill="none" stroke="#e03030" stroke-width="2"/>',
  '<path d="M1 14l4-6 3 3 6-9" fill="none" stroke="#e03030" stroke-width="2"/><path d="M10 9h5v5h-5z" fill="#f08080"/>',
  ...['M4 8h8', 'M5 5h6v6H5z', 'M8 4v8M5 8h6', 'M5 5l6 6M11 5l-6 6'].map((m) => square('#dba520', m)),
  ...['M8 4v8', 'M5 6h6M8 6v6', 'M5 5h6v6H5z', 'M5 5h6v3H5v3h6', 'M5 4v8h6M5 8h6', 'M4 8h8M8 5v6'].map((m) => square('#6fb055', m)),
];
const bubble = '<svg viewBox="0 0 16 14"><path d="M8 1c9 0 9 9 0 9H6l-3 3V9C-1 7 0 1 8 1z" fill="#888"/></svg>';
const bolt = '<svg viewBox="0 0 16 14"><path d="M9 0L3 8h4l-1 6 7-8H9z" fill="#f5a31a"/></svg>';
all('.toolbar').forEach((bar) => {
  bar.innerHTML = `<div class="tools">${glyphs.map((g) => `<svg viewBox="0 0 16 16">${g}</svg>`).join('')}</div>
    <span class="app-name">信管家</span>
    <div class="tool-btns"><button type="button">${bolt}交易</button><button type="button">${bubble}论坛</button><button type="button">${bubble}退出</button></div>`;
});
all('.side-tabs').forEach((nav) => {
  nav.innerHTML = ['我的页面', '国际板块', '新闻资讯']
    .map((t, i) => `<button type="button" class="${nav.dataset.on == i ? 'on' : ''}">${t}</button>`).join('');
});

/* quote panel */
const stats = [
  ['涨跌', '1.10 %', '', '昨结', '23559.60', ''], ['总手', '418', 'hot', '涨停', '- -', 'dim'],
  ['持仓', '418', 'hot', '开盘', '23559.60', ''], ['最低', '23100.00', '', '幅度', '1.10%', ''],
  ['昨收', '- -', '', '昨持', '- -', ''], ['跌停', '- -', '', '结算', '23559.60', ''], ['最高', '24299.20', '', '', '', ''],
];
all('.quote').forEach((q) => {
  q.innerHTML = `<h2>BTCBTC</h2>
    <div class="best"><span>买一</span><b>23819.70</b><span>207</span></div>
    <div class="best"><span>卖一</span><b>23819.80</b><span>211</span></div>
    <div class="levels">${[...'二三四五'].map((n) => `<div class="level"><span>买${n}</span><span>23819.70</span><span>207</span><span>卖${n}</span><span>23819.80</span><span>211</span></div>`).join('')}</div>
    <div class="stats">${stats.map((s) => `<div class="stat"><span>${s[0]}</span><span class="${s[2]}">${s[1]}</span><span>${s[3]}</span><span class="${s[5]}">${s[4]}</span></div>`).join('')}</div>
    <div class="deals"><span>时间</span><span>价格</span><span>现手</span></div>`;
});

/* chart data: direction, body top, body bottom, high, low */
const candles = `r372,430 r370,374,370,395 r325,372,325,376 r262,328 c262,300,262,305 r258,299 c258,266,246,280 c265,323 r298,323,298,333 c289,311,289,314
r178,309,156,309 r178,309,156,309 c176,179,170,190 c177,184,166,192 c184,247,184,250 r186,250 c187,233 c233,238,222,240 r232,238,228,242 c234,293,234,296
r286,292,265,292 r174,290,170,290 c177,218,177,222 c218,239,218,262 c239,290,239,294 c288,311,288,333 r266,311,266,358 r228,270,222,280 c228,278 r267,277,267,292
c266,276 c277,300 c299,303,288,318 r250,305 r230,260,226,264 c232,236,232,242 c237,287 c286,303 r292,300,282,310 c291,299,291,320
c300,356 r334,356,310,356 c333,394 r360,397,350,403 c362,383,362,404 r291,382,265,382 r256,292,238,292 c255,273,245,281 c272,311,256,311 r265,311
r196,265 c196,310 c308,313,292,316 c312,341,312,353 r284,341 r262,285,255,285 c262,298 c297,303,297,328 r264,303,254,303 r212,264
c213,249,213,258 c249,292 r285,292,272,308 c282,285,280,296 c282,299,272,315 r281,300 r282,290,282,312 c283,321 r308,321,292,321 c309,327
r324,331,312,331 c324,371 c370,382,370,400 c381,405,381,436 c405,467 r432,467,420,478 c431,461 c461,500,461,512 c499,534,499,551 r522,536,518,553
r491,526,488,542 c489,513,483,513 r448,513 c450,504 c503,542,503,570 c541,636,541,672 r610,640,578,640 r573,615,570,620 c564,577,558,586 r539,576
r480,546 r430,482 c430,442,413,442 c441,446,435,449`.split(/\s+/).map((s) => {
  const n = s.slice(1).split(',').map(Number);
  return { up: s[0] === 'r', top: n[0], bottom: n[1], high: n[2] ?? n[0], low: n[3] ?? n[1] };
});
const volume = 'r49 r53 r35 r72 c35 r9 c43 c12 r57 c51 r31 r40 c43 c61 c34 r45 c85 c35 r85 c5 r45 r53 c4 c94 c34 c32 r4 r4 c56 r35 c38 c52 c29 r2 r5 c43 c5 c62 r43 c54 c49 r49 c12 r33 c49 r38 r37 c36 c57 r90 r69 c35 c40 c35 r112 r80 c36 c80 r59 r41 c43 c15 r6 c65 c34 r32 r44 c43 r72 c7 r35 c41 c33 c31 c29 r39 c38 c43 c4 r35 r61 c90 r32 c37 c45 c53 r40 r103 c49 r84 r40 r35 c35 c57'
  .split(' ').map((s) => ({ up: s[0] === 'r', h: +s.slice(1) }));
const macd = [-40, -38, -30, -14, -5, 4, 12, 6, 8, 8, 24, 34, 38, 38, 28, 28, 20, 14, 10, 2, -5, 3, 3, 3, -4, -10, -12, -8, -3, -4, -4, -6, -12, -5, -3, 5, 3, -2, -2, -6, -14, -14, -20, -24, -22, -10, 3, 9, 8, 14, 25, 15, 8, 3, 5, 8, 5, 3, 8, 14, 15, 8, 5, 3, -3, -3, -5, -6, -7, -8, -12, -16, -20, -26, -34, -34, -36, -38, -42, -40, -32, -28, -14, -10, -16, -24, -26, -20, -14, -4, 10, 26, 36, 38];
const averages = {
  '#777': '48,347 68,360 88,374 95,375 110,355 140,312 168,282 190,280 215,290 235,290 255,270 275,245 300,212 325,193 345,192 365,203 390,223 420,237 450,257 470,243 490,241 520,242 545,250 570,268 600,263 635,266 660,272 690,288 720,272 750,262 790,264 830,280 860,312 890,330 915,350 936,366 960,350 985,320 1010,310 1040,280 1060,262 1085,270 1120,288 1150,286 1180,295 1205,292 1235,267 1280,260 1305,260 1335,270 1365,280 1405,287 1455,315 1485,338 1525,378 1565,425 1615,470 1645,490 1680,514 1725,495 1745,505 1785,550 1820,588 1848,586 1885,525 1925,468',
  '#8a8000': '48,262 80,293 110,315 140,325 200,326 235,318 265,290 290,265 320,253 350,240 400,217 435,215 450,225 500,228 540,240 565,256 590,255 620,250 650,265 700,277 735,267 780,262 815,270 850,280 890,300 940,330 1020,327 1050,312 1090,290 1120,292 1140,284 1175,291 1210,291 1250,286 1305,286 1335,275 1405,275 1435,285 1485,310 1545,355 1595,410 1645,455 1685,475 1735,490 1775,520 1825,543 1875,543 1925,528',
  '#80008c': '48,250 110,258 190,264 220,275 260,277 300,281 340,280 400,272 440,260 480,240 560,242 600,237 650,237 700,250 780,255 820,260 860,275 930,298 1000,299 1050,293 1120,303 1210,305 1270,294 1305,292 1345,275 1395,280 1465,297 1505,310 1575,348 1635,380 1705,405 1765,450 1825,485 1875,502 1925,508',
  '#005f00': '48,245 110,256 170,260 250,266 340,250 400,247 450,258 520,257 560,268 640,270 700,260 820,262 870,270 950,285 1040,287 1140,290 1305,290 1365,290 1465,296 1525,300 1565,308 1625,335 1665,353 1725,360 1785,390 1845,418 1925,446',
};
const signals = {
  '#777': '48,47 90,47 130,35 170,27 230,26 260,9 300,-4 340,-7 400,-6 450,0 500,-5 560,3 700,12 780,7 850,15 900,27 936,30 970,17 1030,12 1060,0 1130,4 1210,3 1250,-6 1305,-3 1345,-1 1425,5 1485,17 1545,37 1595,47 1645,60 1695,57 1735,56 1785,71 1835,69 1875,49 1925,28',
  '#8a8000': '48,28 90,35 150,35 230,31 300,17 370,4 450,1 540,1 700,7 850,11 936,20 1030,17 1130,7 1250,4 1305,-1 1425,2 1505,10 1585,27 1665,44 1735,51 1835,63 1875,61 1925,48',
};
const sizes = {
  short: { height: 222, top: 11, axis: 145, k: 0.1847, base: 175, zero: 200 },
  tall: { height: 399, top: 20, axis: 262, k: 0.3333, base: 316, zero: 362 },
};
const CYAN = '#00e8e8';

function drawChart(el) {
  const z = sizes[el.dataset.size];
  const px = (x) => x / 3 - 11;
  const cx = (i) => 5 + i * 6.725;
  const py = (v) => z.top + (v - 118) * z.k;
  const curve = (pts, fy, color) => `<polyline fill="none" stroke="${color}" stroke-width=".8" opacity=".85" points="${pts.split(' ').map((p) => { const [a, b] = p.split(',').map(Number); return px(a).toFixed(1) + ',' + fy(b).toFixed(1); }).join(' ')}"/>`;
  const text = (x, y, size, s, fill = '#888') => `<text x="${x}" y="${y}" font-size="${size}" fill="${fill}" text-anchor="middle">${s}</text>`;
  let out = '';
  for (let i = 0; i < 4; i++) {
    const y = Math.round(z.top + (z.axis - z.top) * i / 4) + 0.5;
    out += `<path d="M1 ${y}H641" stroke="#300" stroke-dasharray="2 2"/>`;
  }
  out += `<path d="M1 ${z.axis - 0.5}H641" stroke="#a00000"/>`;
  ['12:55', '13:04', '13:12', '13:21', '13:30', '13:39', '13:48', '13:57', '14:06', '14:15', '14:24'].forEach((t, i) => {
    out += `<path d="M${1.5 + i * 60.6} ${z.axis}v2" stroke="#a00000"/>` + text(5 + i * 60.6, z.axis + 8, 6, '2020-12-21 ' + t);
  });
  ['13:01', '13:08', '13:16', '13:24', '13:32', '13:40', '13:48', '13:56', '14:04', '14:12', '14:20'].forEach((t, i) => {
    out += text(45 + i * 53.8, z.base + 7, 5, '2020-12-21 ' + t, '#666');
  });
  [900, 600, 300, 0].forEach((n, i) => { out += text(8, z.base + 1 - (3 - i) * 40 * z.k, 4, n, '#777'); });
  [40, 20, 0, -20, -40].forEach((n, i) => { out += text(8, z.zero + 1 + (i - 2) * 36 * z.k, 4, n, '#777'); });
  candles.forEach((c, i) => {
    const x = cx(i), top = py(c.top), h = Math.max(1, py(c.bottom) - top), color = c.up ? '#a01c2c' : CYAN;
    out += c.up
      ? `<path d="M${x} ${py(c.high)}V${top}M${x} ${top + h}V${py(c.low)}M${x - 1.3} ${top}h2.600v${h}h-2.600z" stroke="${color}" fill="#24060a" stroke-width=".9"/>`
      : `<path d="M${x} ${py(c.high)}V${py(c.low)}" stroke="${color}"/><path d="M${x - 1.6} ${top}h3.200v${h}h-3.200z" fill="${color}"/>`;
  });
  for (const [color, pts] of Object.entries(averages)) out += curve(pts, py, color);
  volume.forEach((v, i) => { out += `<path d="M${cx(i) - 1.8} ${z.base}h3.600v${-v.h * z.k}h-3.600z" fill="${v.up ? '#f5283d' : CYAN}"/>`; });
  out += `<path d="M1 ${z.zero}H641" stroke="#400" stroke-dasharray="2 2"/>`;
  macd.forEach((m, i) => { out += `<path d="M${cx(i)} ${z.zero}v${-m * z.k}" stroke="${m > 0 ? '#70131d' : '#007478'}"/>`; });
  for (const [color, pts] of Object.entries(signals)) out += curve(pts, (v) => z.zero + v * z.k, color);
  if (el.dataset.size === 'tall') {
    out += `<path d="M106.500 20V262" stroke="#888" stroke-width=".8"/><path d="M1 62.500H641" stroke="#555" stroke-dasharray="2 2"/>
      <rect x="2" y="57" width="33" height="11" rx="1" fill="#444"/>${text(18, 64, 6, '23,929.61', '#ddd')}
      <rect x="80" y="263" width="52" height="11" rx="1" fill="#f00"/>${text(106, 271, 6, '2020-12-21 13:09', '#fff')}`;
  }
  el.insertAdjacentHTML('afterbegin', `<svg viewBox="0 0 642 ${z.height}">${out}</svg>`);
}
all('.chart').forEach(drawChart);

/* market rows */
const flat = (name, zero, code) => [name, zero, zero, zero, '- -', '- -', '- -', zero, '- -', '0.00%', zero, zero, zero, code];
const market = [
  ['BTC', '23819.80', '23819.80', '23819.70', '211', '207', '418', '23559.60', '260.20', '1.10%', '23559.60', '24299.20', '23100.00', 'BTC'],
  flat('小恒指', '0', 'HKEXMHI'),
  ['恒指', '26232', '26231', '26229', '2', '4', '6', '26345', '-113', '-0.43%', '26242', '26322', '26186', 'HKEXHSI'],
  flat('小道指', '0.0', 'CBOTYM'), flat('小标普', '0.00', 'CMEES'), flat('小纳指', '0.0', 'CMENQ'), flat('德指', '0', 'EUREXDAX'),
  flat('小德指', '0.0', 'EUREXDXM'), flat('H股指', '0', 'HKEXHHI'), flat('富时A50', '0.0', 'SGXCN'), flat('沪深300', '0.00', 'CFFEXIF'),
  flat('中证500', '0.00', 'CFFEXIC'), flat('上证502', '0.00', 'CFFEXIH'),
];
document.getElementById('market-rows').innerHTML = market.map((row, r) => {
  const live = r === 0 || r === 2;
  const cls = (i) => {
    if (i === 0 || i === 13) return 'yl r';
    if (i === 1) return live ? 'hl' : 'yl';
    if (i < 4) return live ? 'sky' : '';
    if (i < 6) return live ? 'or' : 'yl';
    if (i === 6) return 'yl';
    if (i === 7) return 'white';
    return r === 0 ? 'red' : '';
  };
  return `<tr><td class="yl">${r + 1}</td>${row.map((v, i) => `<td class="${cls(i)}">${v}</td>`).join('')}<td></td></tr>`;
}).join('');

/* business menu and member table */
document.getElementById('biz-menu').innerHTML = ['会员资产', '报白比管理', '汇率设置', '订单管理', '挂单管理', '交易总览', '产品管理', '产品风控', '产品分类', '审核身份证', '银行卡管理', '商户银行卡管理', '日志管理', '单页管理', '文章管理', '文章分类']
  .map((t, i) => `<li><a href="#"><svg class="icon"><use href="#${i === 13 ? 'i-edit' : i === 14 ? 'i-bars' : 'i-puzzle'}"/></svg>${t}</a></li>`).join('');
document.getElementById('user-rows').innerHTML = [
  ['wct8800', '100000.00', '0.0000', '0', '0'], ['1139', '0.00', '0.0000', '0', '0'], ['北京你好', '0.00', '0.0000', '0', '0'],
  ['zh勇王', '0.00', '0.0000', '0', '0'], ['8965478', '100.00', '0.0000', '0', '0'], ['123456', '28852692.70', '1500.0000', '12088', '-6819.3'],
  ['904566316', '47498.00', '0.0000', '0', '-2500'], ['6666', '0.00', '0.0000', '0', '0'], ['123', '9785.00', '105000.0000', '0', '4130'],
  ['123123', '5585.69', '53200.0000', '5000', '2369899.6995'],
].map((u, i) => `<tr><td>${i + 1}</td>${u.map((v) => `<td>${v}</td>`).join('')}<td><button type="button">赠金</button></td></tr>`).join('');
```
